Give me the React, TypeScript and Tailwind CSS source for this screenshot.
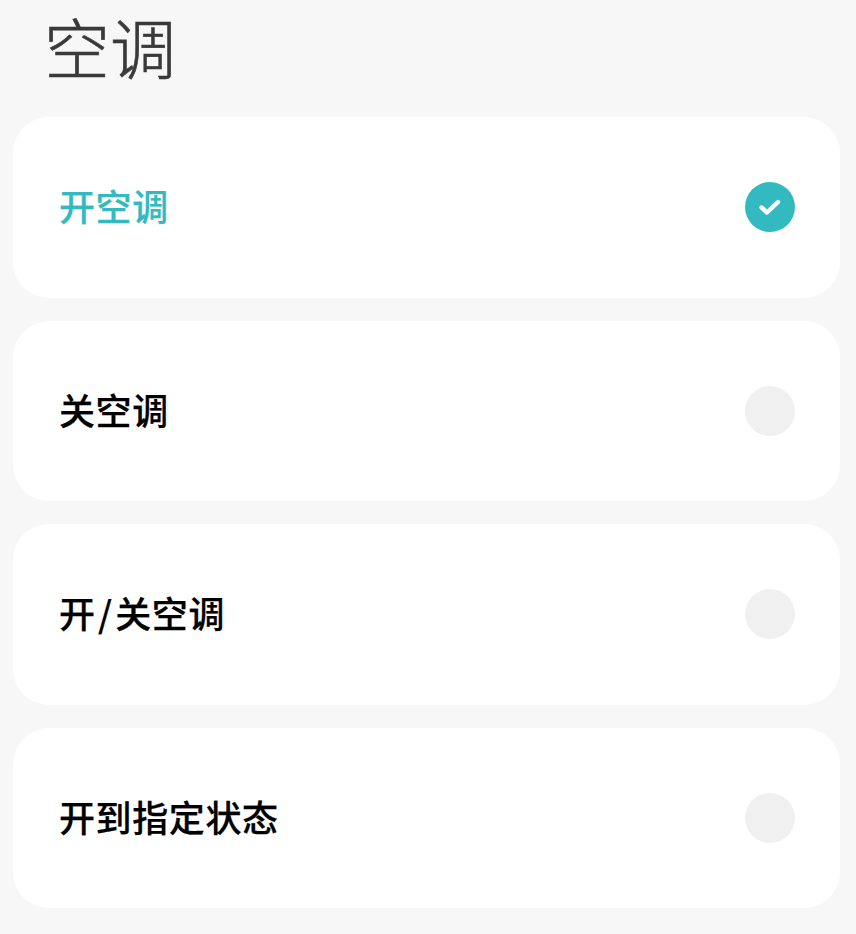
const font = { fontFamily: '"Noto Sans CJK SC", sans-serif' };

function Row({ label, active }: { label: React.ReactNode; active?: boolean }) {
  return (
    <div className="flex h-[180.5px] items-center justify-between rounded-[36px] bg-white pl-[46px] pr-[45px]">
      <span className={`-mt-[4px] text-[36px] leading-none font-medium tracking-[0.6px] [-webkit-text-stroke:0.25px_currentColor] ${active ? "text-[#33bac0]" : "text-black"}`}>{label}</span>
      {active ? (
        <span className="flex h-[50px] w-[50px] items-center justify-center rounded-full bg-[#33bac0]">
          <svg width="24" height="24" viewBox="0 0 24 24" fill="none" stroke="white" strokeWidth="4.4" strokeLinecap="round" strokeLinejoin="round">
            <path d="M3.5 12.5l5.5 5L20 7" />
          </svg>
        </span>
      ) : (
        <span className="h-[50px] w-[50px] rounded-full bg-[#f0f0f0]" />
      )}
    </div>
  );
}

export default function App() {
  return (
    <div className="h-[934px] w-[856px] overflow-hidden bg-[#f7f7f7]" style={font}>
      <div className="h-[117px] pl-[44px] pt-[3px] text-[66px] leading-[84px] font-light text-[#3a3a3a] [-webkit-text-stroke:0.6px_#3a3a3a]">空调</div>
      <div className="flex flex-col gap-[23px] pl-[13px] pr-[16px]">
        <Row label="开空调" active />
        <Row label="关空调" />
        <Row label={<>开<span className="mx-[2.5px]">/</span>关空调</>} />
        <Row label="开到指定状态" />
      </div>
    </div>
  );
}
